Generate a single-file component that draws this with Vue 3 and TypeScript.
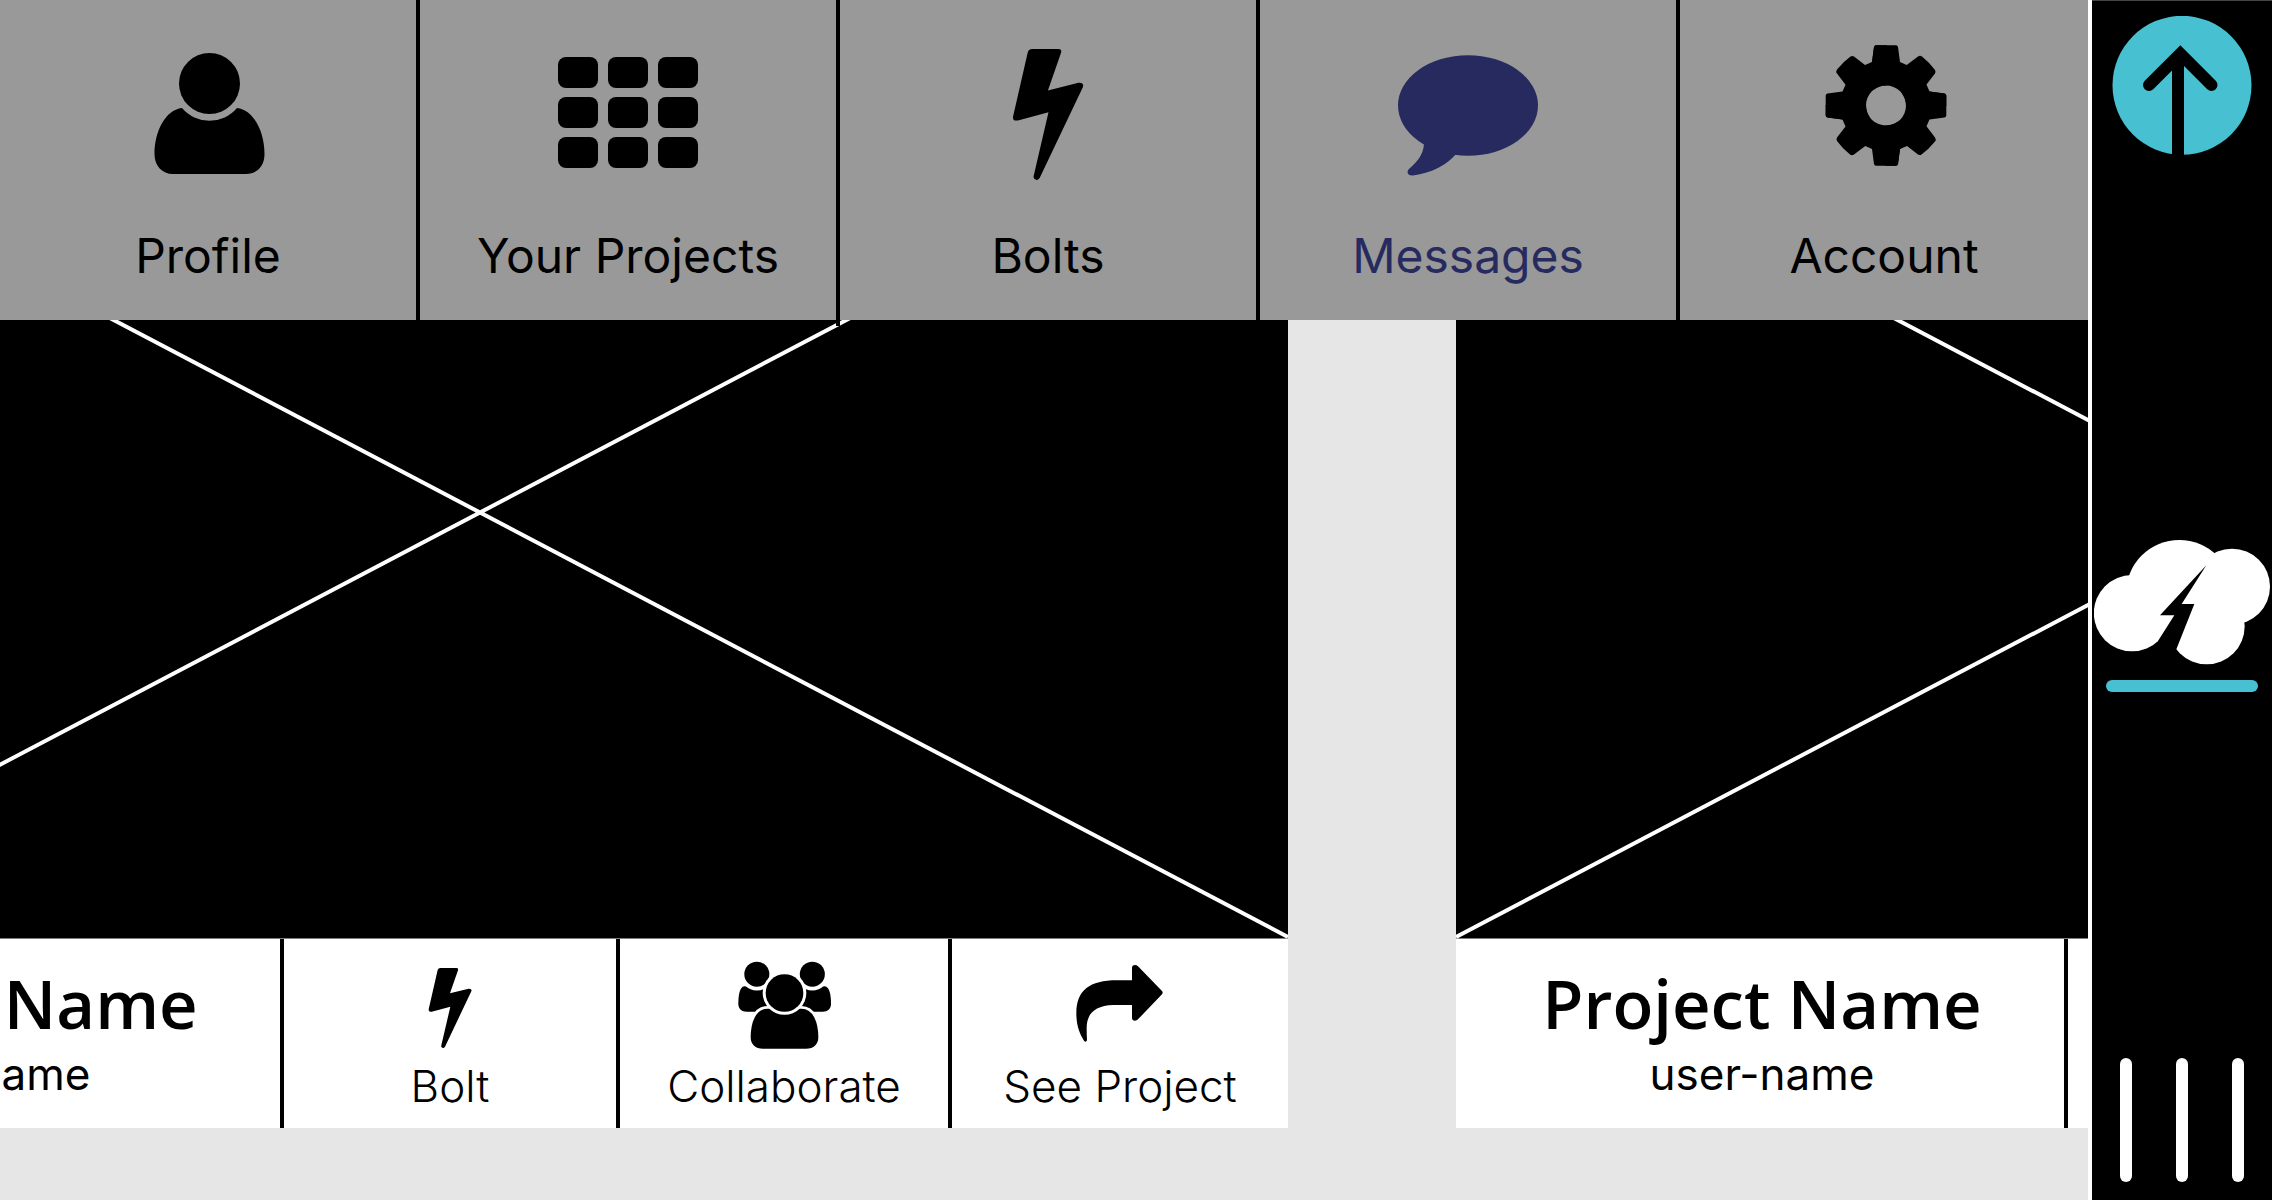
<script setup lang="ts">
type NavId = 'profile' | 'projects' | 'bolts' | 'messages' | 'account'
type ActionId = 'bolt' | 'collaborate' | 'see'

const navItems: { id: NavId; label: string }[] = [
  { id: 'profile', label: 'Profile' },
  { id: 'projects', label: 'Your Projects' },
  { id: 'bolts', label: 'Bolts' },
  { id: 'messages', label: 'Messages' },
  { id: 'account', label: 'Account' },
]

const actions: { id: ActionId; label: string; viewBox: string }[] = [
  { id: 'bolt', label: 'Bolt', viewBox: '-17 33 279 264' },
  { id: 'collaborate', label: 'Collaborate', viewBox: '53 33 279 264' },
  { id: 'see', label: 'See Project', viewBox: '42 33 279 264' },
]

const projects = [
  { id: 1, name: 'Project Name', user: 'user-name' },
  { id: 2, name: 'Project Name', user: 'user-name' },
]

const current: NavId = 'messages'
const tiles = [0, 1, 2]
const quarterTurns = [0, 90, 180, 270]

const boltPath =
  'M84 60Q86 54 92 54H140Q147 54 145 61L121 130L177 116Q188 115 185 124L106 290Q101 297 96 292Q94 290 95 286L122 170L66 185Q56 187 57 178Z'
</script>

<template>
  <div class="app">
    <div class="content">
      <nav class="nav" aria-label="Main">
        <a
          v-for="item in navItems"
          :key="item.id"
          href="#"
          class="nav-item"
          :class="{ active: item.id === current }"
        >
          <svg class="nav-icon" viewBox="0 45 140 136" aria-hidden="true">
            <template v-if="item.id === 'profile'">
              <circle cx="71.500" cy="83.5" r="30.5" />
              <path
                d="M44 108A36 36 0 0 0 99 108C116 110 126.500 132 126.500 154C126.500 166 119 174 108 174H35C24 174 16.500 166 16.500 154C16.500 132 27 110 44 108Z"
              />
            </template>
            <template v-else-if="item.id === 'projects'">
              <template v-for="row in tiles" :key="row">
                <rect
                  v-for="col in tiles"
                  :key="col"
                  :x="col * 50"
                  :y="57 + row * 40"
                  width="40"
                  height="31"
                  rx="8"
                />
              </template>
            </template>
            <path
              v-else-if="item.id === 'bolts'"
              :d="boltPath"
              transform="translate(4 19.6) scale(.545)"
            />
            <template v-else-if="item.id === 'messages'">
              <ellipse cx="70" cy="105.5" rx="70" ry="50.2" />
              <path d="M26 138C27 153 21 160 11 169C8 172 10 176 15 175.500C34 173 49 165 59 153Z" />
            </template>
            <g v-else transform="translate(72 105.500)">
              <path
                v-for="turn in quarterTurns"
                :key="turn"
                :transform="`rotate(${turn})`"
                d="M0 -20V-60.300H10Q11.500 -60.300 12 -58.500L14 -43.500L20.700 -40.500L32 -49Q34 -50.500 36 -49Q44 -42.500 49 -35.500Q50 -34 49 -32L40.500 -21L43.500 -14L58.500 -12Q60.300 -11.500 60.300 -10V0.500H20A20 20 0 0 0 -0.500 -20Z"
              />
              <path
                v-for="turn in quarterTurns"
                :key="turn + 1"
                :transform="`rotate(${turn})`"
                d="M0.500 -20V-60.300H-10Q-11.500 -60.300 -12 -58.500L-14 -43.500L-20 -38L-12 -16A20 20 0 0 1 0.500 -20Z"
              />
            </g>
          </svg>
          <span class="nav-label">{{ item.label }}</span>
        </a>
      </nav>

      <main class="feed">
        <article v-for="project in projects" :key="project.id" class="card">
          <svg class="cover" viewBox="0 0 1616 849" preserveAspectRatio="none" aria-hidden="true">
            <rect width="1616" height="848.5" />
            <path d="M0 -2L1616 847M0 847L1616 -2" />
          </svg>
          <div class="info">
            <header class="title">
              <h2>{{ project.name }}</h2>
              <p>{{ project.user }}</p>
            </header>
            <button v-for="action in actions" :key="action.id" type="button" class="action">
              <svg class="action-icon" :viewBox="action.viewBox" aria-hidden="true">
                <path v-if="action.id === 'bolt'" :d="boltPath" />
                <template v-else-if="action.id === 'collaborate'">
                  <path d="M72 109C58 111 54 135 54 162C54 177 64 185 79 185H150V118Z" />
                  <path d="M313 109C328 111 332 135 332 162C332 177 322 185 307 185H236V118Z" />
                  <circle class="halo" cx="109.500" cy="72.500" r="49" />
                  <circle class="halo" cx="276" cy="72.500" r="49" />
                  <circle cx="109.500" cy="72.500" r="37.500" />
                  <circle cx="276" cy="72.500" r="37.500" />
                  <path
                    class="outlined"
                    d="M142 172C102 172 87 218 87 262C87 284 102 300 128 300H257C283 300 298 284 298 262C298 218 283 172 243 172Z"
                  />
                  <circle class="halo" cx="192.500" cy="129" r="65.500" />
                  <circle cx="192.500" cy="129" r="56.500" />
                </template>
                <path
                  v-else
                  d="M216 54Q216 45 225 45Q230 45 234 49L306 123Q310 128 306 133L234 208Q230 212 225 212Q216 212 216 203V165H160C105 167 80 190 80 235Q80 250 81 271Q77 279 72 272C58 250 49 225 49 190C49 120 90 91 170 91H216Z"
                />
              </svg>
              <span>{{ action.label }}</span>
            </button>
          </div>
        </article>
      </main>
    </div>

    <aside class="rail">
      <button type="button" class="rail-button" aria-label="Back to top">
        <svg width="140" height="139" viewBox="20 16 140 139" aria-hidden="true">
          <circle cx="90" cy="85.300" r="69.500" fill="#47c1d1" />
          <path d="M57 85L88.300 53.800L119.500 85" fill="none" stroke="#000" stroke-width="12" stroke-linecap="round" />
          <path d="M86 56V156" stroke="#000" stroke-width="12" />
        </svg>
      </button>

      <a href="#" class="home" aria-label="Home">
        <svg width="176" height="125" viewBox="72 119 528 375" aria-hidden="true">
          <g fill="#fff">
            <circle cx="186" cy="338.500" r="114.500" />
            <circle cx="328" cy="279" r="160" />
            <circle cx="486" cy="259" r="114" />
            <circle cx="410" cy="378" r="114" />
          </g>
          <path d="M409 195L335 311H373L319 447L300 495H217L262 425L313 345H270Z" />
        </svg>
        <span class="underline"></span>
      </a>

      <button type="button" class="rail-button menu" aria-label="Menu">
        <span v-for="bar in tiles" :key="bar" class="bar"></span>
      </button>
    </aside>
  </div>
</template>

<style>
body {
  margin: 0;
}
</style>

<style scoped>
.app {
  display: flex;
  min-height: 100vh;
  background: #e6e6e6;
  color: #000;
  font-family: Inter, "Liberation Sans", sans-serif;
}

.content {
  flex: 1;
  min-width: 0;
  display: flex;
  flex-direction: column;
}

.nav {
  position: relative;
  z-index: 1;
  display: grid;
  grid-template-columns: repeat(4, 105fr) 102fr;
  background: #999;
}

.nav-item {
  position: relative;
  display: flex;
  flex-direction: column;
  align-items: center;
  gap: 47px;
  padding: 45px 0 36px;
  border-right: 4px solid #000;
  color: #000;
  text-decoration: none;
}

.nav-item:last-child {
  border-right: 0;
}

/* The dividers hang a little over the covers below the bar. */
.nav-item:not(:last-child)::after {
  content: "";
  position: absolute;
  right: -4px;
  bottom: -6px;
  width: 4px;
  height: 6px;
  background: #000;
}

.nav-item.active {
  color: #262a5e;
}

.nav-icon {
  width: 140px;
  height: 136px;
  fill: currentColor;
}

.nav-label {
  font-size: 48px;
  line-height: 56px;
  white-space: nowrap;
}

.feed {
  flex: 1;
  display: flex;
  align-items: flex-start;
  gap: 168px;
  overflow: hidden;
}

.card {
  flex: 0 0 1616px;
  margin-top: -230px;
}

.card:first-child {
  margin-left: -328px;
}

.cover {
  display: block;
  width: 100%;
  height: 849px;
  background: #fff;
}

.cover path {
  fill: none;
  stroke: #fff;
  stroke-width: 4px;
}

.info {
  display: grid;
  grid-template-columns: 612px 336px 332px 336px;
  background: #fff;
}

.title,
.action {
  border: 0;
  border-right: 4px solid #000;
}

.action:last-child {
  border-right: 0;
}

.title {
  padding: 24px 0 30px 4px;
  text-align: center;
}

.title h2 {
  margin: 0;
  font-family: "Open Sans", "Noto Sans", sans-serif;
  font-size: 67px;
  line-height: 80px;
  font-weight: 600;
}

.title p {
  margin: 7px 0 0;
  font-size: 44px;
  line-height: 48px;
}

.action {
  display: flex;
  flex-direction: column;
  align-items: center;
  gap: 13px;
  padding: 22px 0 0;
  background: none;
  color: #000;
  font-family: inherit;
  font-size: 44px;
  line-height: 48px;
  font-weight: 300;
  white-space: nowrap;
}

.action-icon {
  width: 93px;
  height: 88px;
  overflow: visible;
}

.halo {
  fill: #fff;
}

.outlined {
  stroke: #fff;
  stroke-width: 8px;
}

.rail {
  flex: 0 0 180px;
  display: flex;
  flex-direction: column;
  align-items: center;
  justify-content: space-between;
  box-sizing: border-box;
  padding: 15px 0 18px;
  border-top: 1px solid #444;
  background: #000;
  box-shadow: -4px 0 #fff;
  margin-left: 4px;
}

.rail-button {
  padding: 0;
  border: 0;
  background: none;
}

.rail-button svg,
.home svg {
  display: block;
}

.home {
  display: flex;
  flex-direction: column;
  align-items: center;
  gap: 15px;
  padding-top: 18px;
}

.underline {
  width: 152px;
  height: 12px;
  border-radius: 6px;
  background: #47c1d1;
}

.menu {
  display: flex;
  gap: 44px;
}

.bar {
  width: 12px;
  height: 124px;
  border-radius: 6px;
  background: #fff;
}
</style>
